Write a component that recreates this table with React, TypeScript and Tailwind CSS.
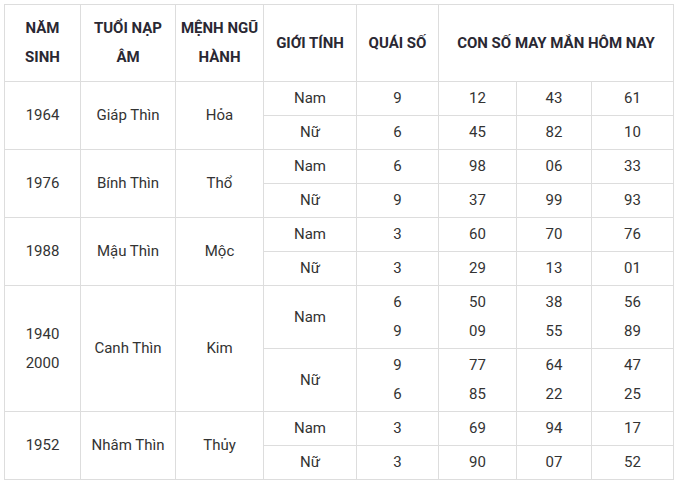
import React from 'react';

type SubRow = { gender: string; quai: string[]; nums: string[][] };
type Group = { years: string[]; napAm: string; menh: string; rows: SubRow[]; h: number };

const groups: Group[] = [
  {
    years: ['1964'], napAm: 'Giáp Thìn', menh: 'Hỏa', h: 34,
    rows: [
      { gender: 'Nam', quai: ['9'], nums: [['12', '43', '61']] },
      { gender: 'Nữ', quai: ['6'], nums: [['45', '82', '10']] },
    ],
  },
  {
    years: ['1976'], napAm: 'Bính Thìn', menh: 'Thổ', h: 34,
    rows: [
      { gender: 'Nam', quai: ['6'], nums: [['98', '06', '33']] },
      { gender: 'Nữ', quai: ['9'], nums: [['37', '99', '93']] },
    ],
  },
  {
    years: ['1988'], napAm: 'Mậu Thìn', menh: 'Mộc', h: 34,
    rows: [
      { gender: 'Nam', quai: ['3'], nums: [['60', '70', '76']] },
      { gender: 'Nữ', quai: ['3'], nums: [['29', '13', '01']] },
    ],
  },
  {
    years: ['1940', '2000'], napAm: 'Canh Thìn', menh: 'Kim', h: 63,
    rows: [
      { gender: 'Nam', quai: ['6', '9'], nums: [['50', '38', '56'], ['09', '55', '89']] },
      { gender: 'Nữ', quai: ['9', '6'], nums: [['77', '64', '47'], ['85', '22', '25']] },
    ],
  },
  {
    years: ['1952'], napAm: 'Nhâm Thìn', menh: 'Thủy', h: 34,
    rows: [
      { gender: 'Nam', quai: ['3'], nums: [['69', '94', '17']] },
      { gender: 'Nữ', quai: ['3'], nums: [['90', '07', '52']] },
    ],
  },
];

const cell = 'border border-[#dddddd] text-center align-middle px-1 py-0 leading-[29px]';
const head = 'border border-[#dddddd] text-center align-middle px-1 py-0 leading-[29px] font-bold text-[#2a2833]';

function Lines({ items }: { items: string[] }) {
  return (
    <>
      {items.map((t, i) => (
        <div key={i}>{t}</div>
      ))}
    </>
  );
}

export default function App() {
  return (
    <div className="w-[678px] h-[483px] bg-white pt-[4px] pl-[4px]" style={{ fontFamily: 'Roboto, "Liberation Sans", sans-serif' }}>
      <table className="border-collapse table-fixed w-[669px] text-[15px] text-[#333333]">
        <colgroup>
          <col className="w-[76px]" />
          <col className="w-[95px]" />
          <col className="w-[88px]" />
          <col className="w-[93px]" />
          <col className="w-[82px]" />
          <col className="w-[78px]" />
          <col className="w-[75px]" />
          <col className="w-[82px]" />
        </colgroup>
        <thead>
          <tr className="h-[77px]">
            <th className={head}>NĂM<br />SINH</th>
            <th className={head}>TUỔI NẠP<br />ÂM</th>
            <th className={head}>MỆNH NGŨ<br />HÀNH</th>
            <th className={head}>GIỚI TÍNH</th>
            <th className={head}>QUÁI SỐ</th>
            <th className={head} colSpan={3}>CON SỐ MAY MẮN HÔM NAY</th>
          </tr>
        </thead>
        <tbody>
          {groups.map((g) =>
            g.rows.map((r, ri) => (
              <tr key={g.years[0] + ri} style={{ height: g.h }}>
                {ri === 0 && (
                  <>
                    <td className={cell} rowSpan={2}><Lines items={g.years} /></td>
                    <td className={cell} rowSpan={2}>{g.napAm}</td>
                    <td className={cell} rowSpan={2}>{g.menh}</td>
                  </>
                )}
                <td className={cell}>{r.gender}</td>
                <td className={cell}><Lines items={r.quai} /></td>
                {[0, 1, 2].map((c) => (
                  <td key={c} className={cell}>
                    <Lines items={r.nums.map((n) => n[c])} />
                  </td>
                ))}
              </tr>
            ))
          )}
        </tbody>
      </table>
    </div>
  );
}
